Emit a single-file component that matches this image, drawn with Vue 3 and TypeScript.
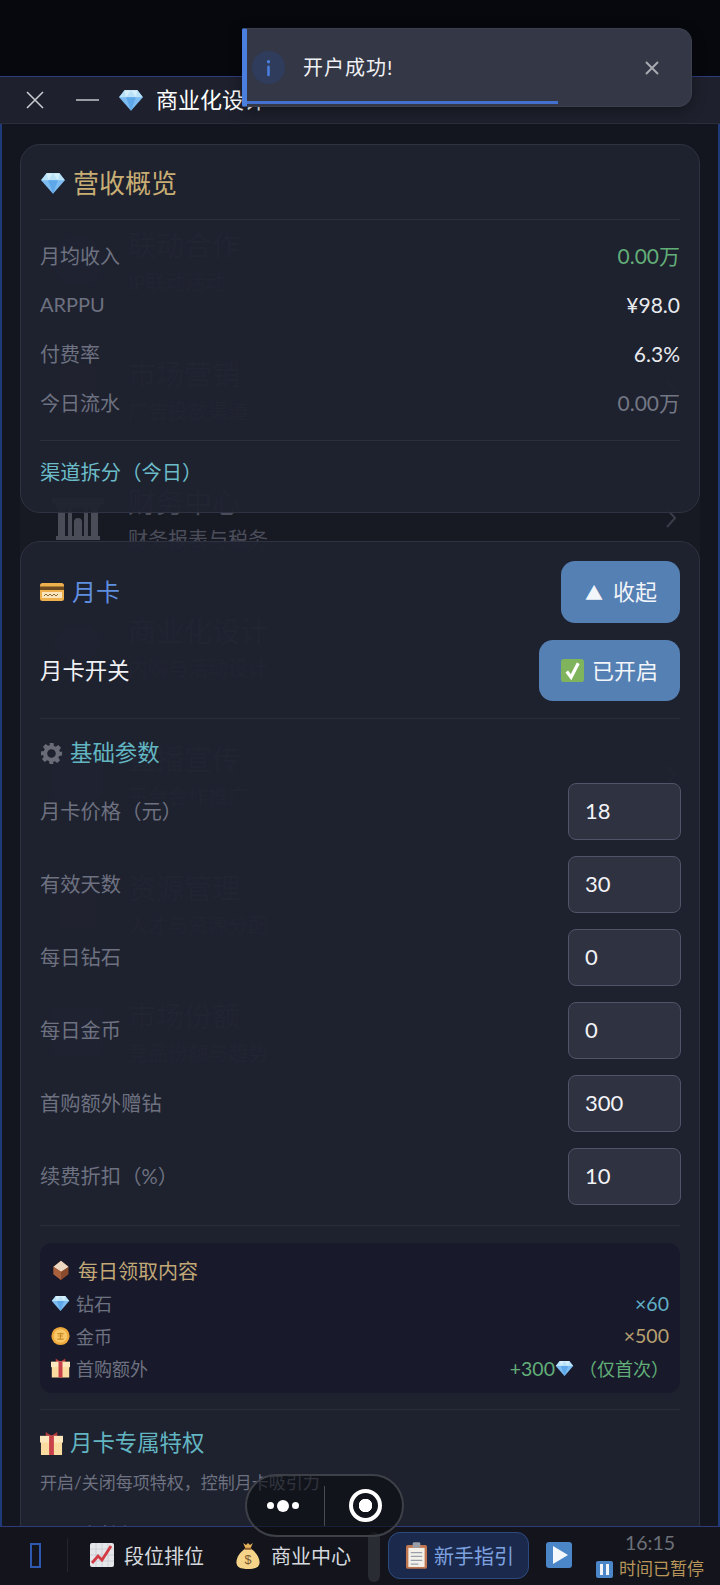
<template>
  <div class="page">
    <svg class="defs" aria-hidden="true">
      <symbol id="i-gem" viewBox="0 0 24 24">
        <path d="M6 3h12l5 6.500L12 22 1 9.500z" fill="#7cbcf0" />
        <path d="M6 3h12l5 6.500H1z" fill="#b9e2f8" />
        <path d="M7.500 9.500h9L12 22z" fill="#5ea8ea" />
        <path d="M6 3l1.500 6.500L12 3l4.500 6.500L18 3z" fill="#d5effb" />
      </symbol>
      <symbol id="i-card" viewBox="0 0 24 24">
        <rect x="0" y="3" width="24" height="18" rx="2.500" fill="#efb04e" />
        <rect x="0" y="6.500" width="24" height="3.500" fill="#6b4a22" />
        <rect x="2" y="12" width="20" height="6" fill="#fbe6bb" />
        <path d="M4 16l2-2 2 2 2-2 2 2 2-2 2 2 2-2" stroke="#8a6a3a" stroke-width="1" fill="none" />
      </symbol>
      <symbol id="i-check" viewBox="0 0 24 24">
        <rect width="24" height="24" rx="3" fill="#7fb35c" />
        <path d="M6 13l4.500 6L18 4.500" stroke="#fff" stroke-width="3.400" fill="none" />
      </symbol>
      <symbol id="i-gear" viewBox="0 0 24 24">
        <path fill="#696c77" fill-rule="evenodd"
          d="M10 1h4l.6 3.100 1.900.8 2.600-1.800 2.800 2.800-1.800 2.600.8 1.900L23 10v4l-3.100.6-.8 1.900 1.800 2.600-2.800 2.800-2.600-1.800-1.900.8L14 23h-4l-.6-3.100-1.900-.8-2.600 1.800-2.800-2.800 1.800-2.600-.8-1.900L1 14v-4l3.100-.6.8-1.900L3.100 4.900l2.800-2.800 2.600 1.800 1.900-.8zM12 7.500a4.500 4.500 0 1 0 0 9 4.500 4.500 0 0 0 0-9z" />
      </symbol>
      <symbol id="i-box" viewBox="0 0 24 24">
        <path d="M12 1l9 7v9l-9 7-9-7V8z" fill="#8a4a2c" />
        <path d="M12 1l9 7-9 6-9-6z" fill="#ecd8c0" />
        <path d="M3 8l9 6v10l-9-7z" fill="#a9603c" />
      </symbol>
      <symbol id="i-coin" viewBox="0 0 24 24">
        <circle cx="12" cy="12" r="11.500" fill="#eda93c" />
        <circle cx="12" cy="12" r="8.500" fill="#f8c766" />
        <path d="M8 9h8M9 12h6M8 16h8M12 8v8" stroke="#c98a2a" stroke-width="1.400" />
      </symbol>
      <symbol id="i-gift" viewBox="0 0 24 24">
        <path d="M6 0l6 4 6-4v5H6z" fill="#b23a3a" />
        <rect x="1" y="10" width="22" height="14" fill="#fbdca0" />
        <rect x="0" y="4" width="24" height="7" fill="#fde8bd" />
        <rect x="9.500" y="4" width="5" height="20" fill="#c8404a" />
      </symbol>
      <symbol id="i-chart" viewBox="0 0 24 24">
        <rect width="24" height="24" rx="2" fill="#e4e6ea" />
        <path d="M0 6h24M0 12h24M0 18h24M6 0v24M12 0v24M18 0v24" stroke="#c6cad2" stroke-width=".8" />
        <path d="M2 20l6-7 4 4 9-14" stroke="#d23c44" stroke-width="2.800" fill="none" />
      </symbol>
      <symbol id="i-bag" viewBox="0 0 24 28">
        <path d="M7 1l3 2 2-2 2 2 3-2-2.500 6h-5z" fill="#e8b45c" />
        <path d="M9 7h6c5 3 9 9 9 14 0 5-4 7-12 7S0 26 0 21C0 16 4 10 9 7z" fill="#f5d48a" />
        <rect x="8.500" y="6" width="7" height="2" fill="#8a5a2a" />
        <text x="12" y="23" font-size="13" text-anchor="middle" fill="#7a5a30" font-family="Liberation Sans, sans-serif">$</text>
      </symbol>
      <symbol id="i-clip" viewBox="0 0 22 28">
        <rect y="3" width="22" height="25" rx="2" fill="#c0764f" />
        <rect x="2.500" y="6" width="17" height="20" fill="#f2f0e8" />
        <rect x="7" y="0" width="8" height="6" rx="1.500" fill="#9a9ea6" />
        <path d="M5 11h12M5 15h12M5 19h12M5 23h8" stroke="#9aa0aa" stroke-width="1.300" />
      </symbol>
      <symbol id="i-bank" viewBox="0 0 56 44">
        <path d="M2 2h52v6H2zM6 8h44v4H6zM6 40h44v4H6z" fill="#4a4d57" />
        <path d="M8 12h7v28H8zM41 12h7v28h-7zM18 12h4v28h-4zM34 12h4v28h-4z" fill="#4a4d57" />
        <path d="M24 40V26a4 4 0 0 1 8 0v14z" fill="#4a4d57" />
      </symbol>
    </svg>

    <div class="status-gap"></div>

    <div class="modal">
      <header class="modal-head">
        <svg class="head-x" viewBox="0 0 18 18"><path d="M1 1l16 16M17 1L1 17" /></svg>
        <span class="head-min"></span>
        <svg class="head-gem"><use href="#i-gem" /></svg>
        <span class="head-title">商业化设计</span>
      </header>

      <div class="modal-body">
        <div class="ghost-list">
          <div v-for="g in ghosts" :key="g.title" class="ghost-item">
            <div class="ghost-icon">
              <svg v-if="g.bank" class="ghost-bank"><use href="#i-bank" /></svg>
              <span v-else class="ghost-blob" :class="g.shape"></span>
            </div>
            <div class="ghost-text">
              <div class="ghost-title">{{ g.title }}</div>
              <div class="ghost-sub">{{ g.sub }}</div>
            </div>
            <svg class="ghost-arrow" viewBox="0 0 10 20"><path d="M1 1l8 9-8 9" /></svg>
          </div>
        </div>

        <div class="content">
          <section class="card overview">
            <div class="overview-title">
              <svg class="ic-gem-lg"><use href="#i-gem" /></svg>
              <span>营收概览</span>
            </div>
            <div v-for="s in stats" :key="s.label" class="stat-row">
              <span class="muted">{{ s.label }}</span>
              <span class="stat-value" :class="s.cls">{{ s.value }}</span>
            </div>
            <div class="channel">渠道拆分（今日）</div>
          </section>

          <section class="card">
            <div class="card-head">
              <div class="month-title">
                <svg class="ic-24"><use href="#i-card" /></svg>
                <span>月卡</span>
              </div>
              <button class="blue-btn collapse"><span class="tri">▲</span>收起</button>
            </div>
            <div class="switch-row">
              <span class="switch-label">月卡开关</span>
              <button class="blue-btn on">
                <svg class="ic-check"><use href="#i-check" /></svg>已开启
              </button>
            </div>
            <div class="line line-a"></div>

            <div class="section-title">
              <svg class="ic-section"><use href="#i-gear" /></svg>
              <span>基础参数</span>
            </div>
            <div class="params">
              <label v-for="p in params" :key="p.label" class="param-row">
                <span class="muted param-label">{{ p.label }}</span>
                <input class="param-input" type="text" :value="p.value" />
              </label>
            </div>
            <div class="line line-b"></div>

            <div class="daily">
              <div class="daily-title">
                <svg class="ic-20"><use href="#i-box" /></svg>
                <span>每日领取内容</span>
              </div>
              <div class="daily-row">
                <span class="daily-label"><svg class="ic-18"><use href="#i-gem" /></svg>钻石</span>
                <span class="v-blue">×60</span>
              </div>
              <div class="daily-row">
                <span class="daily-label"><svg class="ic-18"><use href="#i-coin" /></svg>金币</span>
                <span class="v-gold">×500</span>
              </div>
              <div class="daily-row">
                <span class="daily-label"><svg class="ic-18"><use href="#i-gift" /></svg>首购额外</span>
                <span class="v-green">+300<svg class="ic-18 inline-gem"><use href="#i-gem" /></svg><span class="once">（仅首次）</span></span>
              </div>
            </div>
            <div class="line line-c"></div>

            <div class="section-title perks">
              <svg class="ic-section"><use href="#i-gift" /></svg>
              <span>月卡专属特权</span>
            </div>
            <p class="perks-desc">开启/关闭每项特权，控制月卡吸引力</p>
            <div class="perk-row">
              <span class="muted">已开卡特权</span>
              <span class="v-orange">0.10万</span>
            </div>
          </section>
        </div>
      </div>
    </div>

    <nav class="tabbar">
      <span class="tofu"></span>
      <span class="tab-sep"></span>
      <a class="tab tab-rank"><svg class="ic-24"><use href="#i-chart" /></svg>段位排位</a>
      <a class="tab tab-biz"><svg class="ic-bag"><use href="#i-bag" /></svg>商业中心</a>
      <span class="thumb"></span>
      <a class="guide"><svg class="ic-clip"><use href="#i-clip" /></svg>新手指引</a>
      <span class="play"><i></i></span>
      <div class="clock">
        <div class="time">16:15</div>
        <div class="paused"><span class="pause-ic"><i></i><i></i></span>时间已暂停</div>
      </div>
    </nav>

    <div class="toast">
      <span class="toast-icon">
        <svg viewBox="0 0 6 20"><circle cx="3" cy="2.500" r="2" /><rect x="1.500" y="7" width="3" height="13" rx="1.500" /></svg>
      </span>
      <span class="toast-text">开户成功!</span>
      <svg class="toast-close" viewBox="0 0 14 14"><path d="M1 1l12 12M13 1L1 13" /></svg>
      <span class="toast-progress"></span>
    </div>

    <div class="capsule">
      <span class="dots"><i></i><i class="big"></i><i></i></span>
      <span class="cap-sep"></span>
      <span class="ring"></span>
    </div>
  </div>
</template>

<script setup lang="ts">
const ghosts = [
  { title: '联动合作', sub: 'IP联动活动', shape: 'round' },
  { title: '市场营销', sub: '广告投放渠道', shape: 'red' },
  { title: '财务中心', sub: '财务报表与税务', bank: true },
  { title: '商业化设计', sub: '内购与活动设计', shape: 'hex' },
  { title: '直播宣传', sub: '平台合作推广', shape: 'square' },
  { title: '资源管理', sub: '人才与资源分配', shape: 'red' },
  { title: '市场份额', sub: '竞品份额与趋势', shape: 'square' }
]

const stats = [
  { label: '月均收入', value: '0.00万', cls: 'v-green' },
  { label: 'ARPPU', value: '¥98.0', cls: 'v-white' },
  { label: '付费率', value: '6.3%', cls: 'v-white' },
  { label: '今日流水', value: '0.00万', cls: 'muted-v' }
]

const params = [
  { label: '月卡价格（元）', value: '18' },
  { label: '有效天数', value: '30' },
  { label: '每日钻石', value: '0' },
  { label: '每日金币', value: '0' },
  { label: '首购额外赠钻', value: '300' },
  { label: '续费折扣（%）', value: '10' }
]
</script>

<style>
html,
body {
  margin: 0;
  background: #07080e;
}
</style>

<style scoped>
.page {
  position: relative;
  width: 720px;
  height: 1585px;
  overflow: hidden;
  display: flex;
  flex-direction: column;
  background: #07080e;
  color: #fff;
  font-family: "Lato", "Noto Sans CJK SC", sans-serif;
  font-size: 20px;
}

.defs {
  position: absolute;
  width: 0;
  height: 0;
}

.status-gap {
  height: 76px;
  flex: none;
}

.modal {
  flex: 1;
  min-height: 0;
  display: flex;
  flex-direction: column;
  border-top: 1px solid #2d3c7c;
  border-bottom: 1px solid #2d3c7c;
}

.modal-head {
  height: 46px;
  flex: none;
  display: flex;
  align-items: center;
  padding-left: 26px;
  background: #1e212d;
  border-bottom: 1px solid #2b2e3a;
}

.head-x {
  width: 18px;
  height: 18px;
  fill: none;
  stroke: #c8cad0;
  stroke-width: 1.600;
}

.head-min {
  width: 23px;
  height: 2px;
  margin-left: 32px;
  background: #9a9ca4;
}

.head-gem {
  width: 26px;
  height: 26px;
  margin-left: 19px;
}

.head-title {
  margin-left: 12px;
  margin-bottom: 4px;
  font-size: 22px;
}

.modal-body {
  flex: 1;
  min-height: 0;
  overflow: hidden;
  display: grid;
  align-items: start;
  background: #14161f;
  border-left: 2px solid #1f3a78;
  border-right: 2px solid #1f3a78;
}

.ghost-list,
.content {
  grid-area: 1 / 1;
  min-width: 0;
}

.ghost-list {
  padding-top: 73px;
}

.ghost-item {
  height: 128.500px;
  display: flex;
  align-items: center;
  margin: 0 18px;
  padding: 0 24px 0 29px;
  box-sizing: border-box;
  background: #171923;
}

.ghost-icon {
  width: 58px;
  height: 60px;
  display: flex;
  align-items: center;
  justify-content: center;
  margin-right: 21px;
}

.ghost-bank {
  width: 56px;
  height: 44px;
}

.ghost-blob {
  display: block;
  width: 50px;
  height: 50px;
  background: #33353f;
}

.ghost-blob.round {
  border-radius: 50%;
}

.ghost-blob.red {
  width: 36px;
  background: #43303a;
  border-radius: 6px;
}

.ghost-blob.hex {
  clip-path: polygon(25% 8%, 75% 8%, 100% 45%, 50% 95%, 0 45%);
}

.ghost-blob.square {
  border-radius: 8px;
}

.ghost-text {
  flex: 1;
  margin-top: 4px;
}

.ghost-title {
  font-size: 28px;
  line-height: 38px;
  color: #4b4e5a;
}

.ghost-sub {
  margin-top: 0;
  font-size: 20px;
  line-height: 36px;
  color: #4b4e5a;
}

.ghost-arrow {
  width: 10px;
  height: 20px;
  fill: none;
  stroke: #3a3d48;
  stroke-width: 2;
}

.content {
  display: flex;
  flex-direction: column;
  gap: 28px;
  padding: 20px 18px 0;
  position: relative;
}

.card {
  border: 1px solid #2f3341;
  border-radius: 20px;
  background: rgba(31, 34, 47, 0.95);
  padding: 19px 19px 0;
}

.overview {
  height: 369px;
  box-sizing: border-box;
}

.overview-title {
  display: flex;
  align-items: center;
  height: 38px;
  padding-bottom: 17px;
  border-bottom: 1px solid #2c2f3c;
  margin-bottom: 12px;
  font-size: 26px;
  color: #c8ae74;
  box-sizing: content-box;
}

.overview-title span,
.month-title span,
.section-title span {
  margin-bottom: 4px;
}

.ic-gem-lg {
  width: 26px;
  height: 26px;
  margin-right: 7px;
}

.stat-row {
  height: 49px;
  box-sizing: border-box;
  padding-bottom: 3px;
  display: flex;
  align-items: center;
  justify-content: space-between;
}

.stat-value {
  font-size: 21px;
}

.muted {
  color: #6d7180;
}

.muted-v {
  color: #737784;
}

.v-green {
  color: #62ae78;
}

.v-white {
  color: #e8eaee;
}

.channel {
  margin-top: 12px;
  padding-top: 15px;
  border-top: 1px solid #2c2f3c;
  line-height: 32px;
  font-size: 20.300px;
  color: #6bbcc8;
}

.card-head {
  height: 62px;
  display: flex;
  align-items: center;
  justify-content: space-between;
}

.month-title {
  display: flex;
  align-items: center;
  gap: 8px;
  font-size: 24px;
  color: #5f8fe0;
}

.blue-btn {
  height: 61px;
  box-sizing: border-box;
  border: none;
  border-radius: 14px;
  background: #5580b4;
  color: #f2f5f9;
  font: inherit;
  font-size: 22px;
  display: flex;
  align-items: center;
  padding: 0 22px 4px;
}

.collapse {
  height: 62px;
  width: 119px;
  padding: 0 0 4px 24px;
}

.tri {
  margin-right: 10px;
  margin-top: 4px;
  font-size: 18px;
}

.switch-row {
  margin-top: 17px;
  display: flex;
  align-items: center;
  justify-content: space-between;
  font-size: 22.400px;
  color: #f0f1f4;
}

.switch-label {
  margin-bottom: 4px;
}

.ic-check {
  width: 23px;
  height: 23px;
  margin-right: 8px;
  margin-top: 4px;
}

.line {
  height: 1px;
  background: #2a2d3a;
}

.line-a {
  margin-top: 17px;
}

.section-title {
  display: flex;
  align-items: center;
  gap: 7px;
  height: 34px;
  margin-top: 17px;
  font-size: 22.400px;
  color: #62b6c2;
}

.ic-section {
  width: 23px;
  height: 23px;
  flex: none;
}

.params {
  margin-top: 13px;
  display: flex;
  flex-direction: column;
  gap: 16px;
}

.param-row {
  display: flex;
  align-items: center;
  justify-content: space-between;
}

.param-label {
  font-size: 20.300px;
  margin-bottom: 4px;
}

.param-input {
  width: 113px;
  height: 57px;
  margin-right: -1px;
  padding: 0 0 3px 16px;
  box-sizing: border-box;
  border: 1.500px solid #4f5468;
  border-radius: 8px;
  background: #2f3241;
  color: #f2f3f6;
  font: inherit;
  font-size: 22px;
  outline: none;
}

.line-b {
  margin-top: 20px;
}

.daily {
  margin-top: 17px;
  height: 150px;
  box-sizing: border-box;
  padding: 11px 11px 0;
  border-radius: 12px;
  background: #181a2b;
}

.daily-title {
  display: flex;
  align-items: center;
  gap: 7px;
  height: 32px;
  margin-bottom: 1px;
  font-size: 20px;
  color: #c2a877;
}

.daily-row {
  height: 32.500px;
  display: flex;
  align-items: center;
  justify-content: space-between;
  font-size: 18px;
}

.daily-label {
  display: flex;
  align-items: center;
  gap: 6px;
  color: #6d7180;
}

.v-blue {
  color: #62b0c8;
  font-size: 19.500px;
}

.v-gold {
  color: #b8a070;
  font-size: 19.500px;
}

.daily-row .v-green {
  display: flex;
  align-items: center;
  font-size: 19.500px;
}

.once {
  font-size: 18px;
}

.inline-gem {
  margin-right: 5px;
}

.v-orange {
  color: #c99a3c;
}

.line-c {
  margin-top: 16px;
}

.perks {
  margin-top: 16px;
}

.perks-desc {
  margin: 11px 0 0;
  font-size: 17px;
  line-height: 24px;
  color: #6d7180;
}

.perk-row {
  margin-top: 25px;
  display: flex;
  justify-content: space-between;
  height: 60px;
}

.ic-24 {
  width: 24px;
  height: 24px;
  flex: none;
}

.ic-20 {
  width: 20px;
  height: 24px;
  flex: none;
}

.ic-18 {
  width: 19px;
  height: 20px;
  flex: none;
}

.tabbar {
  height: 58px;
  box-sizing: border-box;
  padding-bottom: 2px;
  flex: none;
  display: flex;
  align-items: center;
  background: #14151c;
  font-size: 20px;
  color: #d6d9de;
}

.tofu {
  width: 7px;
  height: 21px;
  margin-left: 30px;
  border: 2px solid #2f58b0;
}

.tab-sep {
  width: 1px;
  height: 34px;
  margin-left: 26px;
  background: #24262e;
}

.tab {
  display: flex;
  align-items: center;
}

.tab-rank {
  margin-left: 22px;
  gap: 10px;
}

.tab-biz {
  margin-left: 32px;
  gap: 11px;
}

.ic-bag {
  width: 24px;
  height: 27px;
}

.thumb {
  width: 12px;
  height: 50px;
  margin-left: 17px;
  margin-top: 4px;
  border-radius: 6px;
  background: #2a2c33;
}

.guide {
  width: 141px;
  height: 47px;
  margin-left: 8px;
  box-sizing: border-box;
  display: flex;
  align-items: center;
  gap: 7px;
  padding-left: 17px;
  border: 1px solid #2d4a80;
  border-radius: 12px;
  background: #1b2a4c;
  color: #7ea2e0;
}

.ic-clip {
  width: 21px;
  height: 27px;
}

.play {
  width: 26px;
  height: 26px;
  margin-left: 17px;
  border-radius: 3px;
  background: #4a86c8;
  display: flex;
  align-items: center;
  justify-content: center;
}

.play i {
  width: 0;
  height: 0;
  margin-left: 3px;
  border-left: 15px solid #f4f7fb;
  border-top: 9px solid transparent;
  border-bottom: 9px solid transparent;
}

.clock {
  margin-left: 24px;
  display: flex;
  flex-direction: column;
  align-items: center;
}

.time {
  font-size: 19.500px;
  line-height: 28px;
  color: #6c7078;
}

.paused {
  display: flex;
  align-items: center;
  gap: 6px;
  font-size: 17px;
  line-height: 24px;
  color: #b8955a;
}

.pause-ic {
  width: 17px;
  height: 17px;
  border-radius: 2px;
  background: #4a86c8;
  display: flex;
  align-items: center;
  justify-content: center;
  gap: 3px;
}

.pause-ic i {
  width: 3px;
  height: 11px;
  background: #f0f4f8;
}

.toast {
  position: absolute;
  left: 242px;
  top: 28px;
  width: 450px;
  height: 79px;
  box-sizing: border-box;
  display: flex;
  align-items: center;
  background: #343746;
  border: 1px solid #3d404e;
  border-left: 5px solid #4a7fe0;
  border-radius: 2px 14px 14px 2px;
  box-shadow: 0 4px 14px rgba(0, 0, 0, 0.35);
}

.toast-icon {
  width: 33px;
  height: 33px;
  margin-left: 5px;
  border-radius: 50%;
  background: #2f3c5c;
  display: flex;
  align-items: center;
  justify-content: center;
}

.toast-icon svg {
  width: 5px;
  height: 18px;
  fill: #4a7fe0;
}

.toast-text {
  margin-left: 18px;
  margin-bottom: 2px;
  font-size: 20px;
  letter-spacing: 1px;
  color: #f0f1f4;
}

.toast-close {
  width: 14px;
  height: 14px;
  margin-left: auto;
  margin-right: 32px;
  fill: none;
  stroke: #a8aab2;
  stroke-width: 2;
}

.toast-progress {
  position: absolute;
  left: 0;
  bottom: 2px;
  width: 311px;
  height: 3px;
  background: #4470d0;
}

.capsule {
  position: absolute;
  left: 245px;
  top: 1474px;
  width: 159px;
  height: 63px;
  box-sizing: border-box;
  display: flex;
  align-items: center;
  border: 2px solid #3e4048;
  border-radius: 32px;
  background: rgba(10, 11, 16, 0.6);
}

.dots {
  display: flex;
  align-items: center;
  gap: 3px;
  margin-left: 20px;
}

.dots i {
  width: 7px;
  height: 7px;
  border-radius: 50%;
  background: #fff;
}

.dots i.big {
  width: 12px;
  height: 12px;
}

.cap-sep {
  width: 1px;
  height: 40px;
  margin-left: 25px;
  background: #4a4c54;
}

.ring {
  width: 33px;
  height: 33px;
  margin-left: 24px;
  box-sizing: border-box;
  border: 4px solid #fff;
  border-radius: 50%;
  background: radial-gradient(circle, #fff 0 6.500px, transparent 7px);
}
</style>
